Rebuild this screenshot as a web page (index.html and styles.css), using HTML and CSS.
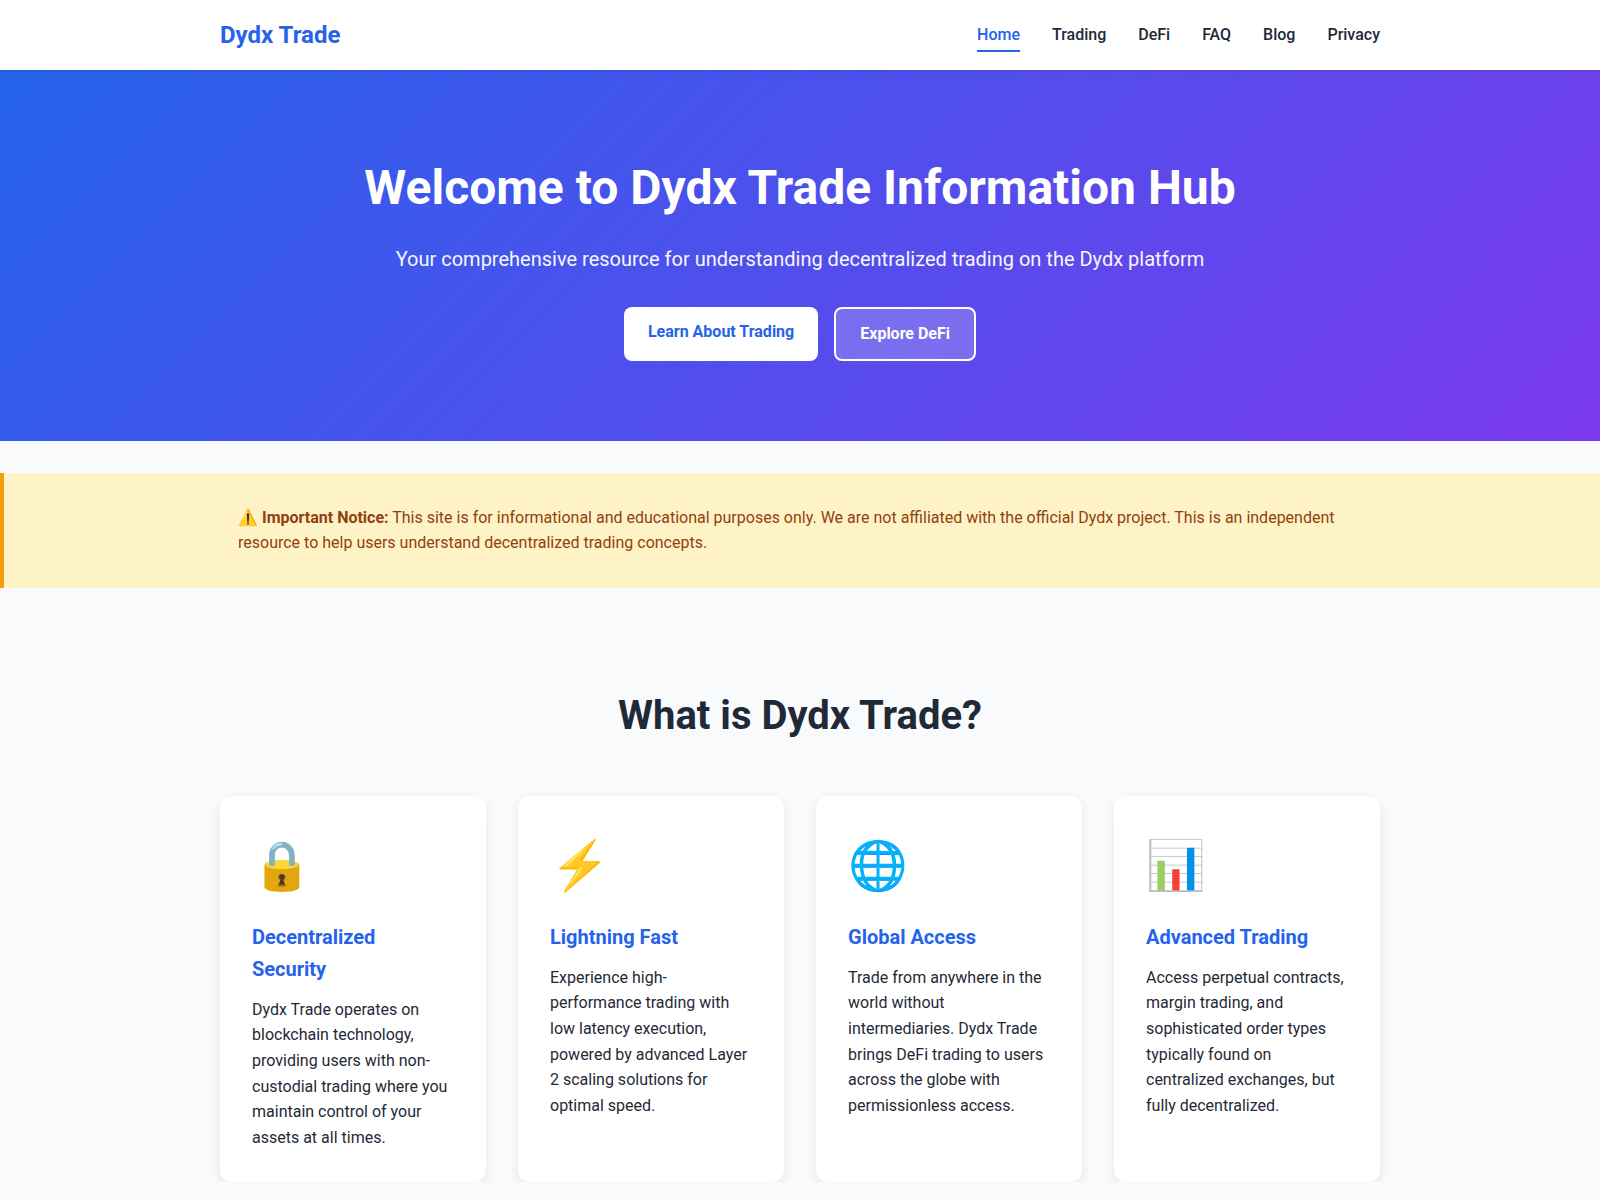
FILE: index.html
```html
<!DOCTYPE html>
<html lang="en">
<head>
    <meta charset="UTF-8">
    <meta name="viewport" content="width=device-width, initial-scale=1.0">
    <title>Dydx Trade Information Hub</title>
    <link rel="stylesheet" href="styles.css">
</head>
<body>
    <header class="site-header">
        <nav class="nav-inner">
            <a class="logo" href="#">Dydx Trade</a>
            <ul class="nav-links">
                <li><a class="active" href="#">Home</a></li>
                <li><a href="#">Trading</a></li>
                <li><a href="#">DeFi</a></li>
                <li><a href="#">FAQ</a></li>
                <li><a href="#">Blog</a></li>
                <li><a href="#">Privacy</a></li>
            </ul>
        </nav>
    </header>

    <section class="hero">
        <h1>Welcome to Dydx Trade Information Hub</h1>
        <p>Your comprehensive resource for understanding decentralized trading on the Dydx platform</p>
        <div class="hero-buttons">
            <a class="btn btn-primary" href="#">Learn About Trading</a>
            <a class="btn btn-secondary" href="#">Explore DeFi</a>
        </div>
    </section>

    <section class="notice">
        <p>⚠️ <strong>Important Notice:</strong> This site is for informational and educational purposes only. We are not affiliated with the official Dydx project. This is an independent resource to help users understand decentralized trading concepts.</p>
    </section>

    <section class="features">
        <h2>What is Dydx Trade?</h2>
        <div class="card-grid">
            <div class="card">
                <div class="card-icon">🔒</div>
                <h3>Decentralized Security</h3>
                <p>Dydx Trade operates on blockchain technology, providing users with non-custodial trading where you maintain control of your assets at all times.</p>
            </div>
            <div class="card">
                <div class="card-icon">⚡</div>
                <h3>Lightning Fast</h3>
                <p>Experience high-performance trading with low latency execution, powered by advanced Layer 2 scaling solutions for optimal speed.</p>
            </div>
            <div class="card">
                <div class="card-icon">🌐</div>
                <h3>Global Access</h3>
                <p>Trade from anywhere in the world without intermediaries. Dydx Trade brings DeFi trading to users across the globe with permissionless access.</p>
            </div>
            <div class="card">
                <div class="card-icon">📊</div>
                <h3>Advanced Trading</h3>
                <p>Access perpetual contracts, margin trading, and sophisticated order types typically found on centralized exchanges, but fully decentralized.</p>
            </div>
        </div>
    </section>
</body>
</html>
```

FILE: styles.css
```css
* {
    margin: 0;
    padding: 0;
    box-sizing: border-box;
}

body {
    font-family: Roboto, "Liberation Sans", sans-serif;
    font-size: 16px;
    line-height: 1.6;
    color: #1f2937;
    background-color: #f9fafb;
}

a {
    text-decoration: none;
}

.site-header {
    background: #ffffff;
    box-shadow: 0 1px 3px rgba(0, 0, 0, 0.1);
    position: relative;
}

.nav-inner {
    max-width: 1200px;
    margin: 0 auto;
    padding: 16px 20px;
    display: flex;
    justify-content: space-between;
    align-items: center;
}

.logo {
    font-size: 24px;
    font-weight: 700;
    color: #2563eb;
}

.nav-links {
    display: flex;
    gap: 32px;
    list-style: none;
}

.nav-links a {
    display: block;
    padding: 4px 0 2px;
    color: #1f2937;
    font-weight: 500;
    border-bottom: 2px solid transparent;
}

.nav-links a.active {
    color: #2563eb;
    border-bottom-color: #2563eb;
}

.hero {
    padding: 80px 20px;
    text-align: center;
    color: #ffffff;
    background: linear-gradient(135deg, #2563eb 0%, #7c3aed 100%);
}

.hero h1 {
    font-size: 48px;
    font-weight: 700;
    margin-bottom: 16px;
}

.hero p {
    font-size: 20px;
    opacity: 0.95;
    margin-bottom: 32px;
}

.hero-buttons {
    display: flex;
    justify-content: center;
    gap: 16px;
}

.btn {
    padding: 12px 24px;
    border-radius: 8px;
    font-weight: 700;
}

.btn-primary {
    background: #ffffff;
    color: #2563eb;
}

.btn-secondary {
    color: #ffffff;
    background: rgba(255, 255, 255, 0.2);
    border: 2px solid #ffffff;
}

.notice {
    margin-top: 32px;
    background: #fef3c7;
    border-left: 4px solid #f59e0b;
    padding: 32px 20px;
}

.notice p {
    max-width: 1128px;
    margin: 0 auto;
    color: #92400e;
}

.features {
    max-width: 1200px;
    margin: 0 auto;
    padding: 96px 20px 0;
}

.features h2 {
    font-size: 40px;
    font-weight: 700;
    text-align: center;
    margin-bottom: 48px;
}

.card-grid {
    display: grid;
    grid-template-columns: repeat(4, 1fr);
    gap: 32px;
}

.card {
    background: #ffffff;
    border-radius: 12px;
    padding: 32px;
    box-shadow: 0 4px 12px rgba(0, 0, 0, 0.08);
}

.card-icon {
    font-size: 48px;
    margin-bottom: 16px;
}

.card h3 {
    font-size: 20px;
    font-weight: 700;
    color: #2563eb;
    margin-bottom: 12px;
}
```
